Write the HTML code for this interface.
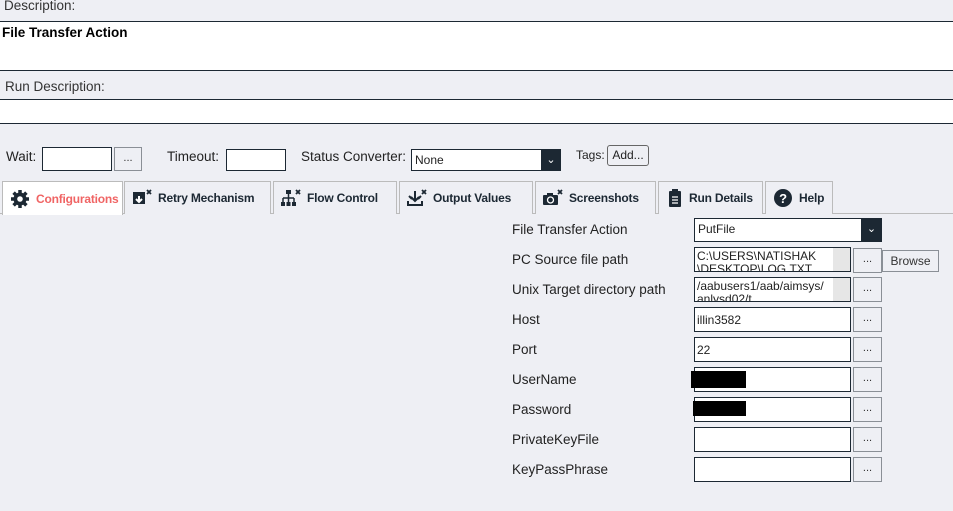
<!DOCTYPE html>
<html><head><style>
*{box-sizing:border-box;margin:0;padding:0}
body{width:953px;height:511px;background:#eeeff4;font-family:"Liberation Sans",sans-serif;font-size:13px;color:#222;position:relative;overflow:hidden}
.a{position:absolute;white-space:nowrap}
.inp{position:absolute;background:#fff;border:1px solid #1c2833;height:25px;font-size:12px;padding:2px 0 0 2px;overflow:hidden;line-height:13px}
.btn{position:absolute;background:#eeeff4;border:1px solid #8a8f96;width:29px;height:25px;text-align:center;font-size:11px;line-height:20px;color:#333}
.tab{position:absolute;top:181px;height:33px;border:1px solid #bbb;border-bottom:none;background:#eeeff4;font-weight:bold;font-size:12px;letter-spacing:-0.2px;color:#1c2833;display:flex;align-items:center;padding-left:6px;gap:5px;white-space:nowrap;overflow:hidden}
.lbl{position:absolute;left:512px;font-size:13.5px;color:#222;white-space:nowrap}
.ic{width:22px;height:20px;flex:none}
</style></head><body>
<div class="a" style="left:4px;top:-2px;font-size:13.5px;color:#333">Description:</div>
<div class="a" style="left:0;top:21px;width:953px;height:50px;background:#fff;border-top:1px solid #1c2833;border-bottom:1px solid #1c2833"></div>
<div class="a" style="left:2px;top:25px;font-weight:bold;font-size:13.5px;color:#000">File Transfer Action</div>
<div class="a" style="left:5px;top:79px;font-size:13.5px;color:#333">Run Description:</div>
<div class="a" style="left:0;top:99px;width:953px;height:25px;background:#fff;border-top:1px solid #1c2833;border-bottom:1px solid #1c2833"></div>

<div class="a" style="left:6px;top:149px;font-size:13.5px">Wait:</div>
<div class="inp" style="left:42px;top:147px;width:70px;height:24px"></div>
<div class="btn" style="left:114px;top:147px;width:28px;height:24px">...</div>
<div class="a" style="left:167px;top:149px;font-size:13.5px">Timeout:</div>
<div class="inp" style="left:226px;top:149px;width:60px;height:22px"></div>
<div class="a" style="left:301px;top:149px;font-size:13.5px">Status Converter:</div>
<div class="inp" style="left:411px;top:149px;width:150px;height:22px;padding:4px 0 0 3px">None</div>
<div class="a" style="left:541px;top:149px;width:20px;height:22px;background:#1c2833;color:#fff;text-align:center;font-size:11px;line-height:22px">&#8964;</div>
<div class="a" style="left:576px;top:148px;font-size:12px">Tags:</div>
<div class="a" style="left:607px;top:145px;width:42px;height:21px;border:1px solid #666;border-radius:3px;font-size:12px;text-align:center;line-height:19px">Add...</div>

<div class="a" style="left:0;top:213px;width:953px;height:1px;background:#bbb"></div>
<div class="tab" style="left:2px;width:121px;background:#fff;color:#f06464;height:34px">
<svg class="ic" viewBox="0 0 20 20"><circle cx="10" cy="10" r="6.5" fill="#1c2833"/><g stroke="#1c2833" stroke-width="3.5"><path d="M10 1v18M1 10h18M3.6 3.6l12.8 12.8M16.4 3.6L3.6 16.4"/></g><circle cx="10" cy="10" r="2.8" fill="#fff"/></svg>Configurations</div>
<div class="tab" style="left:124px;width:147px">
<svg class="ic" viewBox="0 0 22 20"><rect x="2" y="4" width="12" height="12" fill="#1c2833"/><path d="M8 8v6M5 11l3 3 3-3" stroke="#fff" stroke-width="2" fill="none"/><path d="M16 2l4 4M20 2l-4 4" stroke="#1c2833" stroke-width="1.8"/></svg>Retry Mechanism</div>
<div class="tab" style="left:273px;width:124px">
<svg class="ic" viewBox="0 0 22 20"><rect x="6" y="2" width="5" height="4" fill="#1c2833"/><path d="M8.5 6v4M3 10h11M3 10v4M8.5 10v4M14 10v4" stroke="#1c2833" stroke-width="1.5"/><rect x="1" y="14" width="4" height="4" fill="#1c2833"/><rect x="6.5" y="14" width="4" height="4" fill="#1c2833"/><rect x="12" y="14" width="4" height="4" fill="#1c2833"/><path d="M16 2l4 4M20 2l-4 4" stroke="#1c2833" stroke-width="1.8"/></svg>Flow Control</div>
<div class="tab" style="left:399px;width:134px">
<svg class="ic" viewBox="0 0 22 20"><path d="M2 13v4h14v-4M9 3v9M5 9l4 4 4-4M3 8l3 3M15 8l-3 3" stroke="#1c2833" stroke-width="2" fill="none"/><path d="M16 2l4 4M20 2l-4 4" stroke="#1c2833" stroke-width="1.8"/></svg>Output Values</div>
<div class="tab" style="left:535px;width:121px">
<svg class="ic" viewBox="0 0 22 20"><rect x="1" y="7" width="15" height="10" rx="1" fill="#1c2833"/><rect x="5" y="5" width="6" height="3" fill="#1c2833"/><circle cx="8.5" cy="12" r="3" fill="none" stroke="#fff" stroke-width="1.3"/><path d="M16 2l4 4M20 2l-4 4" stroke="#1c2833" stroke-width="1.8"/></svg>Screenshots</div>
<div class="tab" style="left:658px;width:105px;gap:4px">
<svg class="ic" viewBox="0 0 20 20" style="width:20px"><rect x="4" y="3" width="12" height="16" rx="1" fill="#1c2833"/><rect x="7" y="1" width="6" height="4" fill="#1c2833"/><path d="M7 9h6M7 12h6M7 15h6" stroke="#fff" stroke-width="1.2"/></svg>Run Details</div>
<div class="tab" style="left:765px;width:68px">
<svg class="ic" viewBox="0 0 20 20"><circle cx="10" cy="10" r="9" fill="#1c2833"/><text x="10" y="15" fill="#fff" font-size="13" font-weight="bold" text-anchor="middle" font-family="Liberation Sans">?</text></svg>Help</div>

<div class="lbl" style="top:222px">File Transfer Action</div>
<div class="inp" style="left:694px;top:218px;width:188px;height:24px;padding:4px 0 0 3px">PutFile</div>
<div class="a" style="left:861px;top:218px;width:21px;height:24px;background:#1c2833;color:#fff;text-align:center;font-size:11px;line-height:22px">&#8964;</div>

<div class="lbl" style="top:252px">PC Source file path</div>
<div class="inp" style="left:694px;top:247px;width:157px;padding-right:18px">C:\USERS\NATISHAK \DESKTOP\LOG.TXT</div>
<div class="a" style="left:833px;top:248px;width:17px;height:23px;background:#e6e6e6"></div>
<div class="btn" style="left:853px;top:248px">...</div>
<div class="btn" style="left:882px;top:250px;width:57px;height:22px;font-size:12px;line-height:20px">Browse</div>

<div class="lbl" style="top:282px">Unix Target directory path</div>
<div class="inp" style="left:694px;top:277px;width:157px;padding-right:18px">/aabusers1/aab/aimsys/ anlysd02/t</div>
<div class="a" style="left:833px;top:278px;width:17px;height:23px;background:#e6e6e6"></div>
<div class="btn" style="left:853px;top:277px">...</div>

<div class="lbl" style="top:312px">Host</div>
<div class="inp" style="left:694px;top:307px;width:157px;padding-top:6px">illin3582</div>
<div class="btn" style="left:853px;top:307px">...</div>
<div class="lbl" style="top:342px">Port</div>
<div class="inp" style="left:694px;top:337px;width:157px;padding-top:6px">22</div>
<div class="btn" style="left:853px;top:337px">...</div>
<div class="lbl" style="top:372px">UserName</div>
<div class="inp" style="left:694px;top:367px;width:157px"></div>
<div class="a" style="left:691px;top:371px;width:55px;height:17px;background:#000"></div>
<div class="btn" style="left:853px;top:367px">...</div>
<div class="lbl" style="top:402px">Password</div>
<div class="inp" style="left:694px;top:397px;width:157px"></div>
<div class="a" style="left:693px;top:401px;width:53px;height:15px;background:#000"></div>
<div class="btn" style="left:853px;top:397px">...</div>
<div class="lbl" style="top:432px">PrivateKeyFile</div>
<div class="inp" style="left:694px;top:427px;width:157px"></div>
<div class="btn" style="left:853px;top:427px">...</div>
<div class="lbl" style="top:462px">KeyPassPhrase</div>
<div class="inp" style="left:694px;top:457px;width:157px"></div>
<div class="btn" style="left:853px;top:457px">...</div>
</body></html>
